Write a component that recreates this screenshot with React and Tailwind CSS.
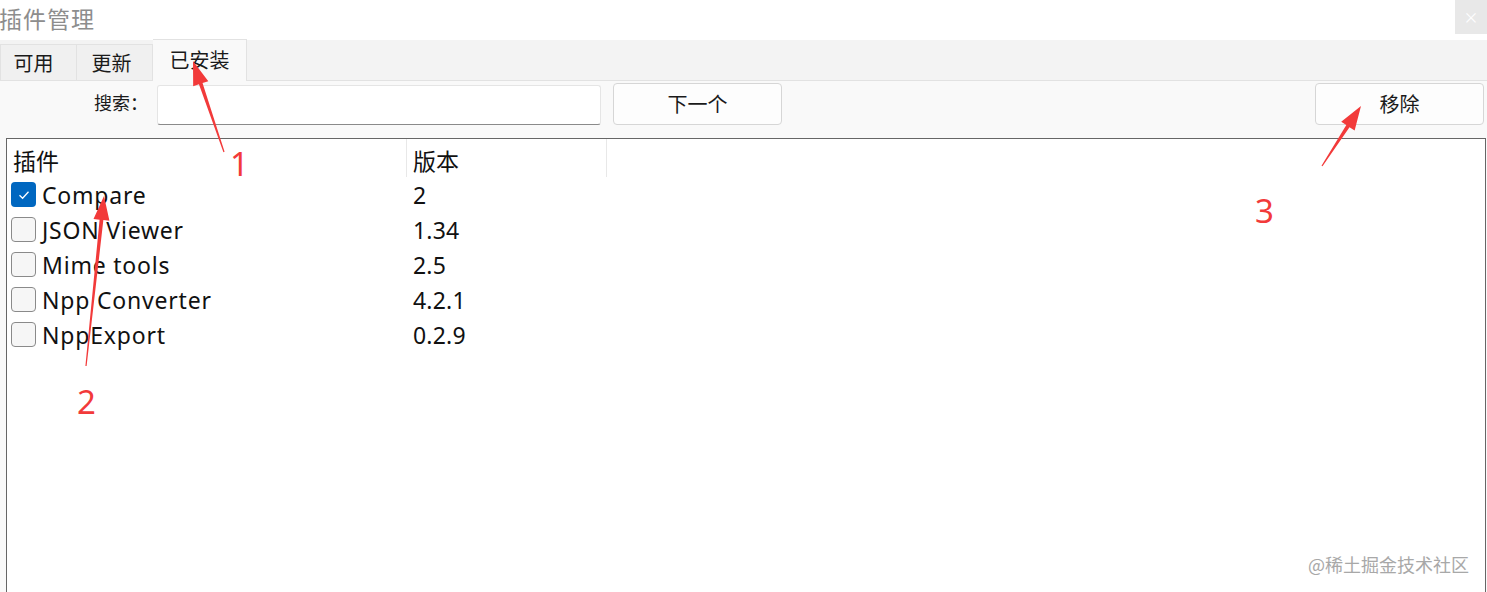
import React from "react";

const plugins = [
  { name: "Compare", ver: "2", checked: true },
  { name: "JSON Viewer", ver: "1.34" },
  { name: "Mime tools", ver: "2.5" },
  { name: "Npp Converter", ver: "4.2.1" },
  { name: "NppExport", ver: "0.2.9" },
];

const cjk = { fontFamily: '"Noto Sans CJK SC", "Noto Sans", sans-serif' };
const latin = { fontFamily: '"Noto Sans", "Noto Sans CJK SC", sans-serif' };

function Arrow({ x1, y1, x2, y2 }) {
  const dx = x2 - x1;
  const dy = y2 - y1;
  const len = Math.hypot(dx, dy);
  const ux = dx / len;
  const uy = dy / len;
  const px = -uy;
  const py = ux;
  const hl = 24;
  const hw = 8;
  const bx = x2 - ux * hl;
  const by = y2 - uy * hl;
  const sw = 1.9;
  const pts = [
    [x1 + px * 0.6, y1 + py * 0.6],
    [bx + px * sw, by + py * sw],
    [bx + px * hw, by + py * hw],
    [x2, y2],
    [bx - px * hw, by - py * hw],
    [bx - px * sw, by - py * sw],
    [x1 - px * 0.6, y1 - py * 0.6],
  ]
    .map((p) => p.join(","))
    .join(" ");
  return <polygon points={pts} fill="#f23a3a" />;
}

export default function App() {
  return (
    <div className="relative w-[1487px] h-[592px] overflow-hidden bg-[#f9f9f9]" style={cjk}>
      {/* title bar */}
      <div className="flex h-[40px] items-start justify-between bg-white">
        <span className="-ml-[1px] text-[23px] tracking-[1px] leading-[36px] text-[#8d8d8d]">插件管理</span>
        <div className="flex h-[34px] w-[32px] items-center justify-center bg-[#e8e8e8] text-[15px] text-white">×</div>
      </div>

      {/* tabs */}
      <div className="flex h-[41px] items-end border-b border-[#e2e2e2] bg-[#f3f3f3]">
        <div className="flex h-[36px] w-[77px] items-center justify-center border border-b-0 border-[#e2e2e2] bg-[#f0f0f0] pr-[10px] text-[20px] text-[#1a1a1a]">可用</div>
        <div className="flex h-[36px] w-[76px] items-center justify-center border border-b-0 border-l-0 border-[#e2e2e2] bg-[#f0f0f0] pr-[6px] text-[20px] text-[#1a1a1a]">更新</div>
        <div className="-mb-px flex h-[42px] w-[94px] items-center justify-center border border-b-0 border-l-0 border-[#e2e2e2] bg-[#f9f9f9] pb-[2px] text-[20px] text-[#1a1a1a]">已安装</div>
      </div>

      {/* toolbar */}
      <div className="flex h-[57px] items-start pt-[2px]">
        <span className="ml-[94px] mt-[6px] w-[63px] text-[18px] leading-[26px] text-[#1a1a1a]">搜索：</span>
        <div className="mt-[2px] h-[40px] w-[444px] rounded-[3px] border border-[#e5e5e5] border-b-[#8a8a8a] bg-white"></div>
        <div className="ml-[12px] flex h-[42px] w-[169px] items-center justify-center rounded-[4px] border border-[#d6d6d6] bg-[#fdfdfd] text-[20px] text-[#1a1a1a]">下一个</div>
        <div className="flex-1"></div>
        <div className="mr-[3px] flex h-[42px] w-[169px] items-center justify-center rounded-[4px] border border-[#d6d6d6] bg-[#fdfdfd] text-[20px] text-[#1a1a1a]">移除</div>
      </div>

      {/* list */}
      <div className="ml-[6px] h-[460px] w-[1480px] border border-[#666666] bg-white">
        <div className="flex h-[38px] items-stretch">
          <div className="flex w-[399px] items-center pl-[6px] pt-[4px] text-[23px] text-[#111]">插件</div>
          <div className="flex w-[201px] items-center border-l border-r border-[#e8e8e8] pl-[6px] pt-[4px] text-[23px] text-[#111]">版本</div>
        </div>
        {plugins.map((p) => (
          <div key={p.name} className="flex h-[35px] items-center">
            <div className="flex w-[399px] items-center pl-[4px]">
              {p.checked ? (
                <div className="flex h-[25px] w-[25px] items-center justify-center rounded-[4px] bg-[#0067c0]">
                  <svg width="14" height="14" viewBox="0 0 14 14">
                    <path d="M2.5 7.2 L5.6 10.2 L11.5 3.8" fill="none" stroke="white" strokeWidth="1.3" />
                  </svg>
                </div>
              ) : (
                <div className="h-[25px] w-[25px] rounded-[4px] border border-[#8a8a8a] bg-[#f6f6f6]"></div>
              )}
              <span className="ml-[6px] pt-[2px] text-[23px] tracking-[0.8px] text-[#111]" style={latin}>{p.name}</span>
            </div>
            <div className="pl-[7px] pt-[2px] text-[23px] tracking-[0.2px] text-[#111]" style={latin}>{p.ver}</div>
          </div>
        ))}
      </div>

      {/* watermark */}
      <div className="absolute left-[1308px] top-[551px] text-[18px] text-[#a8a8a8]">@稀土掘金技术社区</div>

      {/* annotations */}
      <svg className="pointer-events-none absolute inset-0" width="1487" height="592">
        <Arrow x1={224} y1={152} x2={193} y2={61} />
        <Arrow x1={86} y1={366} x2={104} y2={196} />
        <Arrow x1={1322} y1={166} x2={1361} y2={106} />
      </svg>
      <div className="absolute left-[230px] top-[144px] text-[33px] leading-[40px] text-[#f23a3a]" style={latin}>1</div>
      <div className="absolute left-[77px] top-[382px] text-[33px] leading-[40px] text-[#f23a3a]" style={latin}>2</div>
      <div className="absolute left-[1255px] top-[191px] text-[33px] leading-[40px] text-[#f23a3a]" style={latin}>3</div>
    </div>
  );
}
